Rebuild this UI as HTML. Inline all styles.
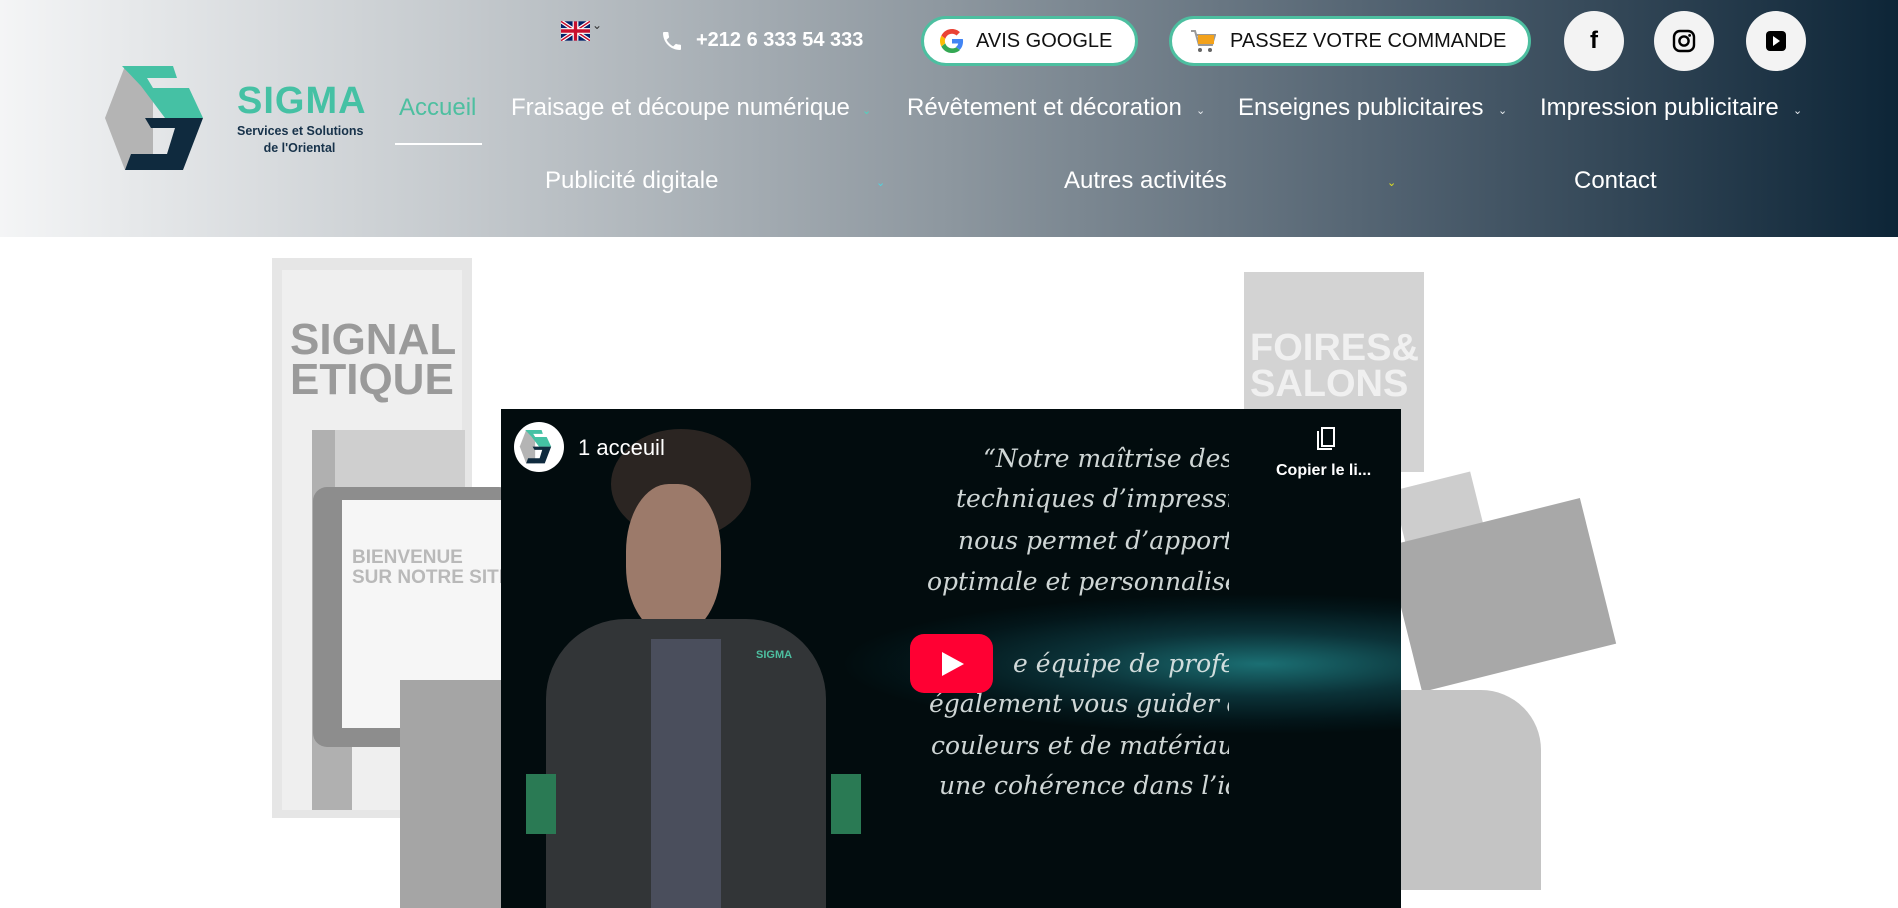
<!DOCTYPE html>
<html><head><meta charset="utf-8"><style>
*{margin:0;padding:0;box-sizing:border-box}
body{width:1898px;height:908px;overflow:hidden;background:#fff;font-family:"Liberation Sans",sans-serif;position:relative}
.hdr{position:absolute;left:0;top:0;width:1898px;height:237px;background:linear-gradient(90deg,#f4f5f6 0%,#c3c8cc 25%,#8d979f 50%,#4d5e6d 75%,#0d2537 100%)}
.a{position:absolute;white-space:nowrap}
.nav{color:#fff;font-size:24px;top:94px}
.nav2{color:#fff;font-size:24px;top:167px}
.chev{position:absolute;font-size:11px;color:#e8ecef}
.btn{position:absolute;top:16px;height:50px;border-radius:25px;background:#fff;border:3px solid #4dbfa0;font-size:20px;color:#111;display:flex;align-items:center}
.soc{position:absolute;top:11px;width:60px;height:60px;border-radius:50%;background:#f3f3f3;display:flex;align-items:center;justify-content:center}
.g{position:absolute;background:#d4d4d4}
.vid{position:absolute;left:501px;top:409px;width:900px;height:499px;overflow:hidden;background:radial-gradient(ellipse 420px 70px at 760px 255px,#1b6f73 0%,#0b3238 45%,#03161a 80%,#020c0e 100%)}
.q{position:absolute;color:#e6eceb;font-family:"DejaVu Serif",serif;font-style:italic;font-size:25px;white-space:nowrap;opacity:.9}
</style></head><body>
<div class="g" style="left:272px;top:258px;width:200px;height:560px;background:#e6e6e6"></div>
<div class="g" style="left:282px;top:270px;width:180px;height:540px;background:#efefef"></div>
<div class="a" style="left:290px;top:320px;font:900 44px 'Liberation Sans';color:#9a9a9a;line-height:40px">SIGNAL<br>ETIQUE</div>
<div class="g" style="left:312px;top:430px;width:40px;height:380px;background:#b0b0b0"></div>
<div class="g" style="left:335px;top:430px;width:130px;height:70px;background:#cfcfcf"></div>
<div class="g" style="left:313px;top:487px;width:200px;height:260px;border-radius:14px;background:#8d8d8d"></div>
<div class="g" style="left:342px;top:500px;width:170px;height:228px;background:#f6f6f6"></div>
<div class="a" style="left:352px;top:548px;font:700 19px 'Liberation Sans';color:#b9b9b9;line-height:20px">BIENVENUE<br>SUR NOTRE SITE</div>
<div class="g" style="left:400px;top:680px;width:110px;height:228px;background:#a5a5a5"></div>
<div class="g" style="left:1244px;top:272px;width:180px;height:200px;background:#d3d3d3"></div>
<div class="a" style="left:1250px;top:330px;font:900 38px 'Liberation Sans';color:#f0f0f0;line-height:36px">FOIRES&amp;<br>SALONS</div>
<div class="g" style="left:1401px;top:480px;width:80px;height:80px;background:#cdcdcd;transform:rotate(-14deg)"></div>
<div class="g" style="left:1401px;top:520px;width:200px;height:150px;background:#a8a8a8;transform:rotate(-14deg)"></div>
<div class="g" style="left:1401px;top:690px;width:140px;height:200px;background:#c4c4c4;border-radius:0 60px 0 0"></div>

<div class="hdr"></div>
<svg class="a" style="left:105px;top:66px" width="120" height="106" viewBox="0 0 120 106">
<polygon points="20,0 0,52 20,104 48,104 48,30" fill="#b4b4b4"/>
<polygon points="17,0 68,0 72,12 42,12 48,22 84,22 98,52 60,52 36,20" fill="#45c1a4"/>
<polygon points="60,52 98,52 78,104 20,104 26,88 62,88 70,62 46,62 40,52" fill="#0f2a3e"/>
</svg>
<div class="a" style="left:237px;top:80px;font:700 38px 'Liberation Sans';color:#45c1a4;letter-spacing:1px">SIGMA</div>
<div class="a" style="left:237px;top:123px;font:700 12.5px 'Liberation Sans';color:#17324a;text-align:center;line-height:17px;width:125px">Services et Solutions<br>de l'Oriental</div>
<svg class="a" style="left:561px;top:21px" width="29" height="20" viewBox="0 0 60 40"><rect width="60" height="40" fill="#012169"/><path d="M0 0L60 40M60 0L0 40" stroke="#fff" stroke-width="8"/><path d="M0 0L60 40M60 0L0 40" stroke="#c8102e" stroke-width="3"/><path d="M30 0V40M0 20H60" stroke="#fff" stroke-width="12"/><path d="M30 0V40M0 20H60" stroke="#c8102e" stroke-width="7"/></svg>
<div class="a" style="left:592px;top:18px;font-size:12px;color:#333">⌄</div>
<svg class="a" style="left:660px;top:28px" width="24" height="26" viewBox="0 0 24 24"><path d="M6.6 10.8c1.4 2.8 3.8 5.1 6.6 6.6l2.2-2.2c.3-.3.7-.4 1-.2 1.1.4 2.300.6 3.6.6.6 0 1 .4 1 1V20c0 .6-.4 1-1 1C10.6 21 3 13.4 3 4c0-.6.4-1 1-1h3.5c.6 0 1 .4 1 1 0 1.3.2 2.5.6 3.6.1.3 0 .7-.2 1z" fill="#fff"/></svg>
<div class="a" style="left:696px;top:29px;font:700 20px 'Liberation Sans';color:#fff">+212 6 333 54 333</div>
<div class="btn" style="left:921px;width:217px;padding-left:16px">
<svg width="24" height="24" viewBox="0 0 48 48" style="margin-right:12px"><path fill="#EA4335" d="M24 9.5c3.5 0 6.6 1.2 9.1 3.6l6.8-6.8C35.8 2.4 30.3 0 24 0 14.6 0 6.6 5.4 2.7 13.3l7.9 6.2C12.5 13.6 17.8 9.5 24 9.5z"/><path fill="#4285F4" d="M46.1 24.5c0-1.6-.1-3.1-.4-4.5H24v9h12.4c-.5 2.9-2.2 5.3-4.6 7l7.5 5.8c4.3-4 6.8-10 6.8-17.3z"/><path fill="#FBBC05" d="M10.5 28.6c-.5-1.4-.8-3-.8-4.6s.3-3.2.8-4.6l-7.9-6.2C1 16.6 0 20.2 0 24s.9 7.4 2.6 10.7l7.9-6.1z"/><path fill="#34A853" d="M24 48c6.5 0 11.9-2.1 15.9-5.8l-7.5-5.8c-2.1 1.4-4.8 2.3-8.4 2.3-6.2 0-11.5-4.2-13.4-9.9l-7.9 6.1C6.6 42.6 14.6 48 24 48z"/></svg>AVIS GOOGLE</div>
<div class="btn" style="left:1169px;width:362px;padding-left:18px">
<svg width="26" height="26" viewBox="0 0 26 26" style="margin-right:14px"><path d="M1 3h4l4 14h13l3-10H7" fill="none" stroke="#999" stroke-width="2"/><rect x="8" y="7" width="16" height="9" fill="#f3a21b"/><circle cx="10" cy="22" r="2" fill="#666"/><circle cx="20" cy="22" r="2" fill="#666"/></svg>PASSEZ VOTRE COMMANDE</div>
<div class="soc" style="left:1564px"><span style="font:700 24px 'Liberation Sans';color:#000">f</span></div>
<div class="soc" style="left:1654px"><svg width="24" height="24" viewBox="0 0 24 24"><rect x="2" y="2" width="20" height="20" rx="6" fill="none" stroke="#000" stroke-width="2.4"/><circle cx="12" cy="12" r="4.6" fill="none" stroke="#000" stroke-width="2.4"/><circle cx="17.6" cy="6.4" r="1.4"/></svg></div>
<div class="soc" style="left:1746px"><svg width="24" height="24" viewBox="0 0 24 24"><rect x="2" y="2" width="20" height="20" rx="4"/><path d="M9 7l7 5-7 5z" fill="#fff"/></svg></div>
<div class="a nav" style="left:399px;color:#4dbfa0">Accueil</div>
<div class="a" style="left:395px;top:143px;width:87px;height:2px;background:#fff"></div>
<div class="a nav" style="left:511px">Fraisage et découpe numérique</div><span class="chev" style="left:862px;top:104px;color:#4dd5c0">⌄</span>
<div class="a nav" style="left:907px">Révêtement et décoration</div><span class="chev" style="left:1196px;top:104px">⌄</span>
<div class="a nav" style="left:1238px">Enseignes publicitaires</div><span class="chev" style="left:1498px;top:104px">⌄</span>
<div class="a nav" style="left:1540px">Impression publicitaire</div><span class="chev" style="left:1793px;top:104px">⌄</span>
<div class="a nav2" style="left:545px">Publicité digitale</div><span class="chev" style="left:876px;top:176px;color:#4dd5e0">⌄</span>
<div class="a nav2" style="left:1064px">Autres activités</div><span class="chev" style="left:1387px;top:176px;color:#e0e020">⌄</span>
<div class="a nav2" style="left:1574px">Contact</div>
<div class="vid">
 <div class="a" style="left:110px;top:20px;width:140px;height:110px;border-radius:50%;background:#2b2522"></div>
 <div class="a" style="left:125px;top:75px;width:95px;height:150px;border-radius:45%;background:#9c7a6a"></div>
 <div class="a" style="left:45px;top:210px;width:280px;height:300px;border-radius:80px 80px 0 0;background:#323537"></div>
 <div class="a" style="left:150px;top:230px;width:70px;height:270px;background:#4a4e5c"></div>
 <div class="a" style="left:25px;top:365px;width:30px;height:60px;background:#2a7a54"></div>
 <div class="a" style="left:330px;top:365px;width:30px;height:60px;background:#2a7a54"></div>
 <div class="a" style="left:255px;top:240px;font:700 11px 'Liberation Sans';color:#4dbfa0">SIGMA</div>
 <div class="a" style="left:13px;top:13px;width:50px;height:50px;border-radius:50%;background:#fff"></div>
 <svg class="a" style="left:18px;top:21px" width="40" height="34" viewBox="0 0 120 106"><polygon points="20,0 0,52 20,104 48,104 48,30" fill="#b4b4b4"/><polygon points="17,0 68,0 72,12 42,12 48,22 84,22 98,52 60,52 36,20" fill="#45c1a4"/><polygon points="60,52 98,52 78,104 20,104 26,88 62,88 70,62 46,62 40,52" fill="#0f2a3e"/></svg>
 <div class="a" style="left:77px;top:26px;font-size:22px;color:#fff">1 acceuil</div>
 <svg class="a" style="left:813px;top:18px" width="24" height="26" viewBox="0 0 24 26"><path d="M4 4v18h14" fill="none" stroke="#fff" stroke-width="2"/><rect x="8" y="1" width="12" height="18" fill="none" stroke="#fff" stroke-width="2"/></svg>
 <div class="a" style="left:775px;top:53px;font:700 16px 'Liberation Sans';color:#fff">Copier le li...</div>
 <div class="a" style="left:0;top:0;width:728px;height:499px;overflow:hidden">
 <div class="q" style="left:482px;top:35px">“Notre maîtrise des d</div>
 <div class="q" style="left:455px;top:75px">techniques d’impression</div>
 <div class="q" style="left:457px;top:117px">nous permet d’apporter</div>
 <div class="q" style="left:426px;top:158px">optimale et personnalisée</div>
 <div class="q" style="left:512px;top:240px">e équipe de professi</div>
 <div class="q" style="left:428px;top:280px">également vous guider da</div>
 <div class="q" style="left:430px;top:322px">couleurs et de matériaux</div>
 <div class="q" style="left:438px;top:362px">une cohérence dans l’ide</div>
 </div>
 <div class="a" style="left:409px;top:225px;width:83px;height:59px;border-radius:14px;background:#ff0033"></div>
 <svg class="a" style="left:437px;top:241px" width="28" height="28" viewBox="0 0 28 28"><path d="M4 2l22 12L4 26z" fill="#fff"/></svg>
</div>
</body></html>
